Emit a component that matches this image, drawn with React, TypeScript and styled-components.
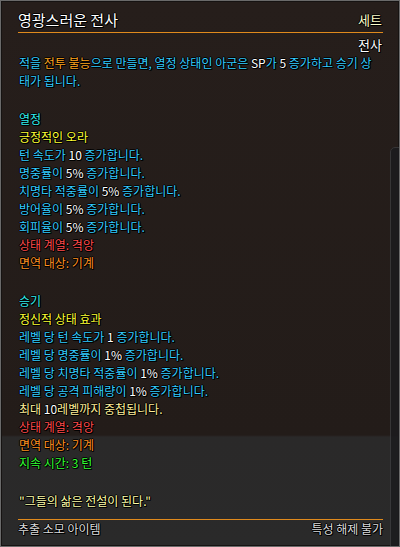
import React from "react";
import styled, { createGlobalStyle } from "styled-components";

const Global = createGlobalStyle`
  html, body { margin: 0; padding: 0; background: #1e1e1e; }
  body { width: 400px; height: 547px; overflow: hidden; }
`;

const Tooltip = styled.div`
  position: relative;
  box-sizing: border-box;
  width: 400px;
  height: 547px;
  border: 1px solid #6a6a6a;
  box-shadow: inset 0 0 0 1px #161312;
  background: linear-gradient(to bottom, #261e1b 0px, #231c19 434px, #2a2929 436px, #2a2a2a 100%);
  padding: 8px 16px 0 17px;
  font-family: "Noto Sans CJK KR", "Noto Sans", sans-serif;
  font-size: 12px;
  color: #33ccff;
  overflow: hidden;
  text-shadow: 1px 0 0 #000, -1px 0 0 #000, 0 1px 0 #000, 0 -1px 0 #000, 1px 1px 0 #000;
`;

const BackPanel = styled.div`
  position: absolute;
  left: 389px;
  top: 146px;
  width: 20px;
  height: 420px;
  border-radius: 5px;
  border: 1px solid #3a3a3c;
  background: #1b1b1e;
  opacity: 0.85;
`;

const Content = styled.div`
  position: relative;
`;

const Header = styled.div`
  display: flex;
  justify-content: space-between;
  align-items: flex-end;
  height: 22px;
  border-bottom: 1px solid #e08a1c;
  padding-bottom: 1px;
`;

const Title = styled.span`
  color: #ffffff;
  font-size: 15px;
  line-height: 22px;
`;

const Category = styled.span`
  color: #ffffcc;
  font-size: 13px;
  line-height: 22px;
  margin-right: 1px;
`;

const SubRight = styled.div`
  text-align: right;
  color: #ffffff;
  font-size: 13px;
  line-height: 18px;
  margin-top: 3px;
  margin-right: 1px;
`;

const Body = styled.div`
  line-height: 18px;
  padding-left: 1px;
`;

const Line = styled.div<{ $c?: string }>`
  color: ${(p) => p.$c || "#33ccff"};
  white-space: nowrap;
`;

const Blank = styled.div`
  height: 20px;
`;

const Para = styled.div`
  line-height: 18px;
  white-space: normal;
  word-break: break-all;
  padding-right: 2px;
`;

const W = styled.span`
  color: #ffffff;
`;
const O = styled.span`
  color: #ffa51e;
`;

const Footer = styled.div`
  display: flex;
  justify-content: space-between;
  border-top: 1px solid #e08a1c;
  margin-top: 9px;
  padding-top: 0;
  color: #dcdcdc;
  font-size: 12px;
  line-height: 18px;
`;

const CYAN = "#33ccff";
const TEAL = "#33eeee";
const YELLOW = "#ffff33";
const RED = "#ff4a4a";
const ORANGE = "#ff9020";
const GREEN = "#33ff33";
const PALE = "#ffee99";
const QUOTE = "#ffffaa";

export default function App() {
  return (
    <>
      <Global />
      <Tooltip>
        <BackPanel />
        <Content>
          <Header>
            <Title>영광스러운 전사</Title>
            <Category>세트</Category>
          </Header>
          <SubRight>전사</SubRight>
          <Body>
            <Para>
              적을 <O>전투 불능</O>으로 만들면, 열정 상태인 아군은 <W>SP</W>가 <W>5</W> 증가하고 승기 상태가 됩니다.
            </Para>
            <Blank />
            <Line $c={TEAL}>열정</Line>
            <Line $c={YELLOW}>긍정적인 오라</Line>
            <Line $c={CYAN}>턴 속도가 <W>10</W> 증가합니다.</Line>
            <Line $c={CYAN}>명중률이 <W>5%</W> 증가합니다.</Line>
            <Line $c={CYAN}>치명타 적중률이 <W>5%</W> 증가합니다.</Line>
            <Line $c={CYAN}>방어율이 <W>5%</W> 증가합니다.</Line>
            <Line $c={CYAN}>회피율이 <W>5%</W> 증가합니다.</Line>
            <Line $c={RED}>상태 계열: 격앙</Line>
            <Line $c={ORANGE}>면역 대상: 기계</Line>
            <Blank />
            <Line $c={TEAL}>승기</Line>
            <Line $c={YELLOW}>정신적 상태 효과</Line>
            <Line $c={CYAN}>레벨 당 턴 속도가 <W>1</W> 증가합니다.</Line>
            <Line $c={CYAN}>레벨 당 명중률이 <W>1%</W> 증가합니다.</Line>
            <Line $c={CYAN}>레벨 당 치명타 적중률이 <W>1%</W> 증가합니다.</Line>
            <Line $c={CYAN}>레벨 당 공격 피해량이 <W>1%</W> 증가합니다.</Line>
            <Line $c={PALE}>최대 <W>10</W>레벨까지 중첩됩니다.</Line>
            <Line $c={RED}>상태 계열: 격앙</Line>
            <Line $c={ORANGE}>면역 대상: 기계</Line>
            <Line $c={GREEN}>지속 시간: 3 턴</Line>
            <Blank />
            <Line $c={QUOTE}>"그들의 삶은 전설이 된다."</Line>
          </Body>
          <Footer>
            <span>추출 소모 아이템</span>
            <span>특성 해제 불가</span>
          </Footer>
        </Content>
      </Tooltip>
    </>
  );
}
